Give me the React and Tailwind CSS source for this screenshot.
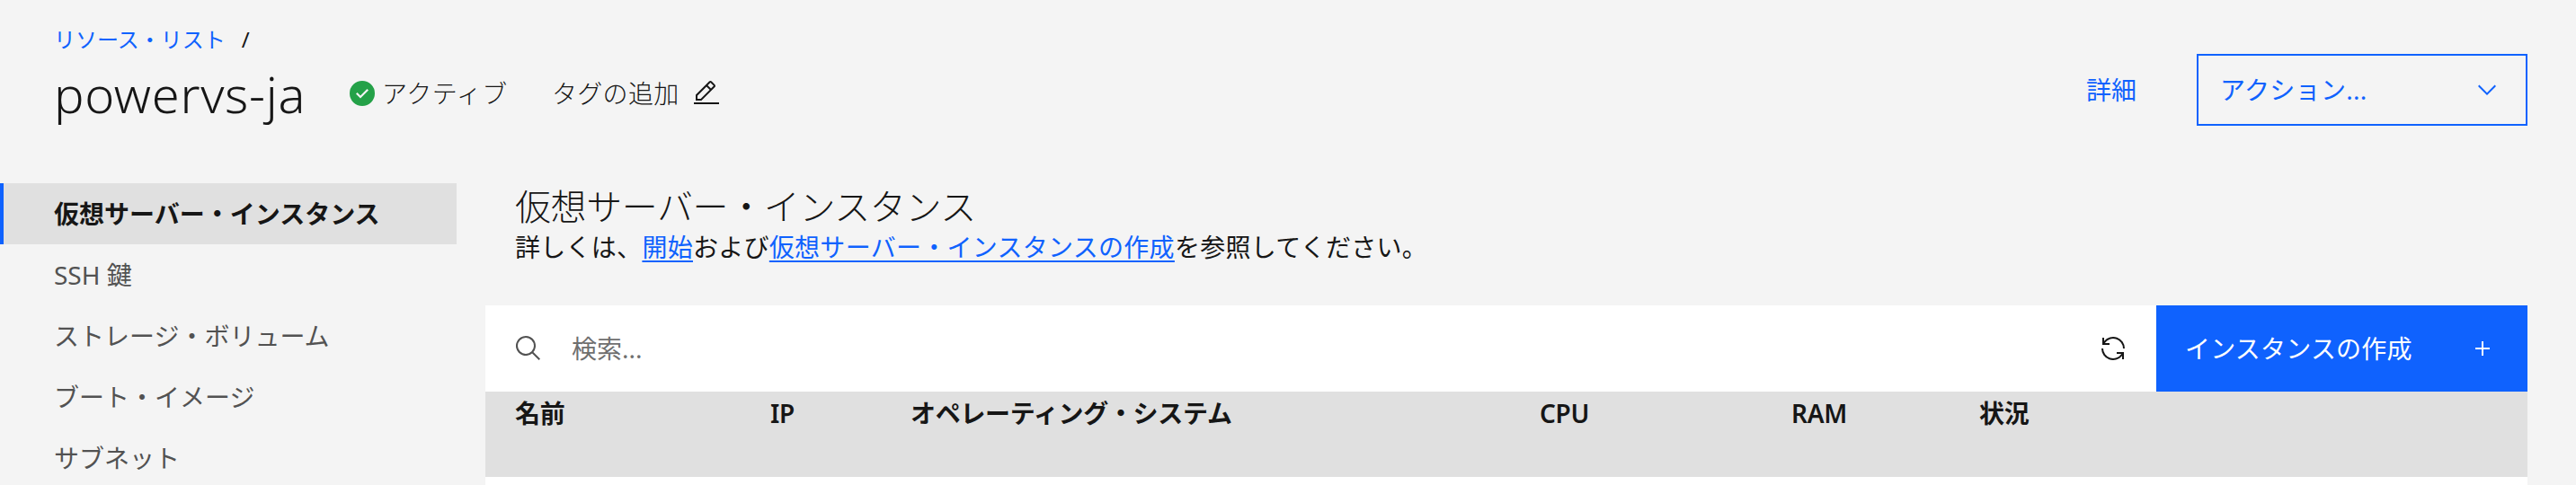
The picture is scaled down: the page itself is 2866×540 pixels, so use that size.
import React from 'react';

const fontStack = 'font-["Noto_Sans","Noto_Sans_CJK_JP",sans-serif]';

const Icon = ({ d, className }) => (
    <svg className={className} viewBox="0 0 32 32" fill="currentColor">
        <path d={d} />
    </svg>
);

const icons = {
    check: 'M16,2A14,14,0,1,0,30,16,14,14,0,0,0,16,2ZM14,21.5908l-5-5L10.5906,15,14,18.4092,21.41,11l1.5957,1.5859Z',
    edit: 'M2 26H30V28H2zM25.4 9c.8-.8.8-2 0-2.8l-3.6-3.6c-.8-.8-2-.8-2.8 0l-15 15V24h6.4L25.4 9zM20.4 4L24 7.6l-3 3L17.4 7 20.4 4zM6 22v-3.6l10-10 3.6 3.6-10 10H6z',
    chevron: 'M16 22L6 12l1.4-1.4 8.6 8.6 8.6-8.6L26 12z',
    search: 'M29,27.5859l-7.5521-7.5521a11.0177,11.0177,0,1,0-1.4141,1.4141L27.5859,29ZM4,13a9,9,0,1,1,9,9A9.01,9.01,0,0,1,4,13Z',
    renew: 'M12 10H6.78A11 11 0 0 1 27 16h2A13 13 0 0 0 6 7.68V4H4v8h8zM20 22h5.22A11 11 0 0 1 5 16H3a13 13 0 0 0 23 8.32V28h2V20H20z',
    add: 'M17 15V8h-2v7H8v2h7v7h2v-7h7v-2h-7z',
};

const navItems = ['SSH 鍵', 'ストレージ・ボリューム', 'ブート・イメージ', 'サブネット'];

const columns = [
    { label: '名前', width: 'w-[284px]' },
    { label: 'IP', width: 'w-[156px]' },
    { label: 'オペレーティング・システム', width: 'w-[700px]' },
    { label: 'CPU', width: 'w-[280px]' },
    { label: 'RAM', width: 'w-[209px]' },
    { label: '状況', width: 'w-[200px]' },
];

export default function App() {
    return (
        <div className={`h-[540px] overflow-hidden bg-[#f4f4f4] text-[#161616] ${fontStack}`}>

            {/* Header */}
            <div className="h-[204px] pl-[60px] pr-[54px] pt-[26px] flex justify-between">
                <div>
                    <div className="flex items-center text-[24px] leading-[36px]">
                        <span className="text-[#0f62fe]">リソース・リスト</span>
                        <span className="ml-[18px]">/</span>
                    </div>
                    <div className="flex items-center mt-[10px]">
                        <h1 className="text-[56px] leading-[64px] font-light tracking-[0.7px] w-[327px]">powervs-ja</h1>
                        <Icon d={icons.check} className="w-[32px] h-[32px] text-[#24a148]" />
                        <span className="ml-[6px] text-[28px] font-light tracking-[0.6px]">アクティブ</span>
                        <span className="ml-[49px] text-[28px] font-light tracking-[0.32px]">タグの追加</span>
                        <Icon d={icons.edit} className="ml-[14px] w-[32px] h-[32px]" />
                    </div>
                </div>
                <div className="flex items-start pt-[34px]">
                    <span className="text-[28px] leading-[80px] text-[#0f62fe]">詳細</span>
                    <div className="ml-[67px] w-[368px] h-[80px] border-2 border-[#0f62fe] pl-[24px] pr-[27px] flex items-center justify-between text-[#0f62fe]">
                        <span className="text-[28px] tracking-[0.32px]">アクション...</span>
                        <Icon d={icons.chevron} className="w-[32px] h-[32px]" />
                    </div>
                </div>
            </div>

            <div className="flex">

                {/* Sidebar */}
                <div className="w-[508px] shrink-0">
                    <div className="h-[68px] pl-[56px] flex items-center bg-[#e0e0e0] border-l-4 border-[#0f62fe] text-[28px] font-semibold">
                        仮想サーバー・インスタンス
                    </div>
                    {navItems.map((item) => (
                        <div key={item} className="h-[68px] pl-[60px] flex items-center text-[28px] text-[#525252]">
                            {item}
                        </div>
                    ))}
                </div>

                {/* Main */}
                <div className="ml-[32px] w-[2272px]">
                    <div className="h-[136px] pl-[33px] pt-[1px]">
                        <h2 className="text-[40px] leading-[50px] font-light tracking-[-0.4px]">仮想サーバー・インスタンス</h2>
                        <p className="text-[28px] leading-[40px] tracking-[0.28px]">
                            詳しくは、<span className="text-[#0f62fe] underline underline-offset-4">開始</span>および<span className="text-[#0f62fe] underline underline-offset-4">仮想サーバー・インスタンスの作成</span>を参照してください。
                        </p>
                    </div>

                    {/* Toolbar */}
                    <div className="h-[96px] flex bg-white">
                        <div className="flex-1 flex items-center pl-[32px] pr-[32px]">
                            <Icon d={icons.search} className="w-[32px] h-[32px] text-[#525252]" />
                            <span className="ml-[32px] flex-1 text-[28px] text-[#6f6f6f]">検索...</span>
                            <Icon d={icons.renew} className="w-[32px] h-[32px]" />
                        </div>
                        <div className="w-[413px] bg-[#0f62fe] text-white pl-[32px] pr-[34px] flex items-center justify-between">
                            <span className="text-[28px] tracking-[0.2px]">インスタンスの作成</span>
                            <Icon d={icons.add} className="w-[32px] h-[32px]" />
                        </div>
                    </div>

                    {/* Table header */}
                    <div className="h-[95px] bg-[#e0e0e0] flex pl-[33px] pt-[6px]">
                        {columns.map((col) => (
                            <div key={col.label} className={`${col.width} text-[28px] leading-[36px] font-semibold tracking-[-0.3px]`}>
                                {col.label}
                            </div>
                        ))}
                    </div>
                    <div className="h-[20px] bg-white" />
                </div>
            </div>
        </div>
    );
}
